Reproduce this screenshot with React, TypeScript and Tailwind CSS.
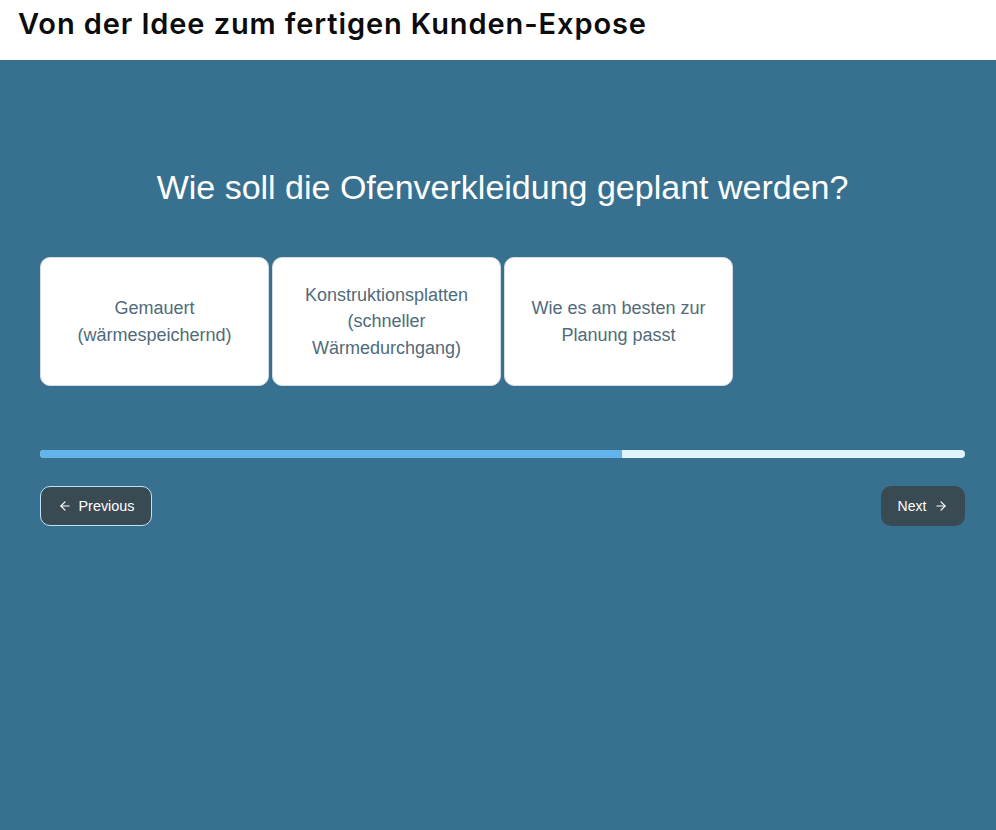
import { ArrowLeft, ArrowRight } from "lucide-react";

const options = [
  ["Gemauert", "(wärmespeichernd)"],
  ["Konstruktionsplatten", "(schneller", "Wärmedurchgang)"],
  ["Wie es am besten zur", "Planung passt"],
];

export default function App() {
  return (
    <div className="min-h-[830px] flex flex-col bg-[#38718f] font-['Liberation_Sans',Arial,sans-serif]">
      {/* HEADER */}
      <header className="h-[60px] bg-white pl-[18px] pt-[4px]">
        <h1 className="font-['Inter',sans-serif] text-[29px] leading-[40px] font-semibold tracking-[0.9px] text-[#0c0c0c]">
          Von der Idee zum fertigen Kunden-Expose
        </h1>
      </header>

      <main className="flex-1 pl-[40px] pr-[31px] pt-[104px]">
        {/* QUESTION */}
        <h2 className="text-center text-[34px] leading-[46px] text-white">
          Wie soll die Ofenverkleidung geplant werden?
        </h2>

        {/* OPTIONS */}
        <div className="flex gap-[3px] mt-[47px]">
          {options.map((lines) => (
            <button
              key={lines[0]}
              className="w-[229px] h-[129px] px-4 flex flex-col items-center justify-center rounded-[10px] border border-[#d5dee4] bg-white text-[18px] leading-[26.6px] text-[#4f6b7c]"
            >
              {lines.map((line) => (
                <span key={line}>{line}</span>
              ))}
            </button>
          ))}
        </div>

        {/* PROGRESS */}
        <div className="mt-[64px] h-[8px] rounded-[4px] overflow-hidden bg-[#e0f5ff]">
          <div className="h-full w-[582px] bg-[#63b3ed]" />
        </div>

        {/* NAV */}
        <div className="flex justify-between mt-[28px]">
          <button className="h-[40px] w-[112px] flex items-center justify-center gap-[7px] rounded-[10px] border border-[#bee3f8] bg-[#3a4a52] text-[14.4px] text-white">
            <ArrowLeft size={14} />
            <span className="pt-[2px]">Previous</span>
          </button>
          <button className="h-[40px] w-[84px] flex items-center justify-center gap-[8px] rounded-[10px] bg-[#3a4a52] text-[14px] text-white">
            Next
            <ArrowRight size={14} />
          </button>
        </div>
      </main>
    </div>
  );
}
